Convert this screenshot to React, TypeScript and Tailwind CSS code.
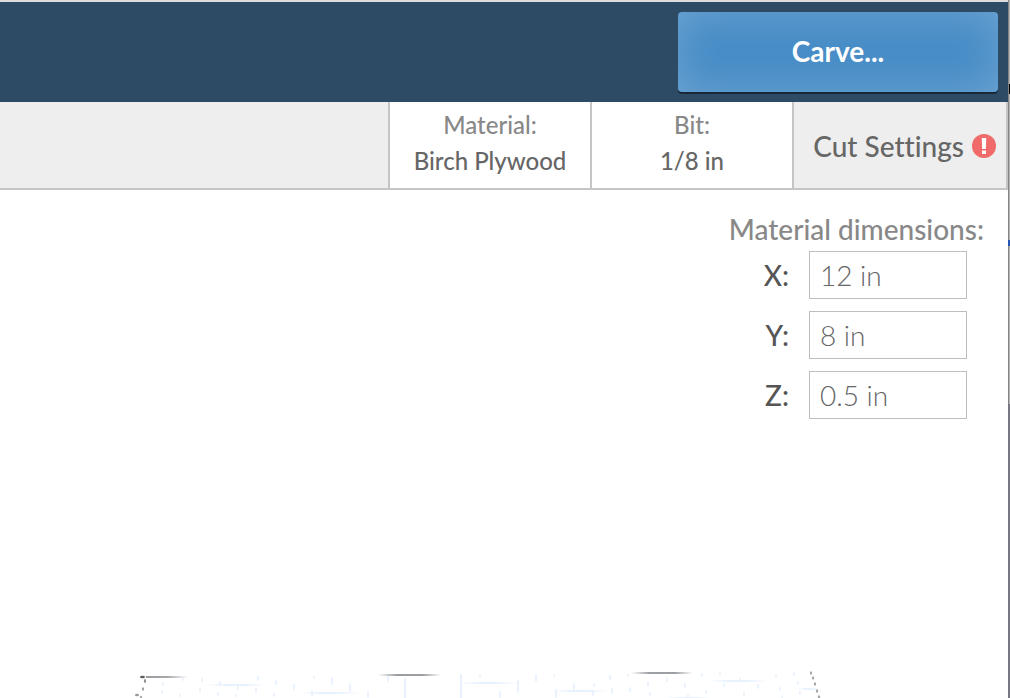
import { useState } from "react";

const axes = [
  { axis: "X", initial: "12 in" },
  { axis: "Y", initial: "8 in" },
  { axis: "Z", initial: "0.5 in" },
];

// Grid lines of the preview bed: x, y, length
const gridRows = [
  [206, 685, 60], [300, 693, 60], [458, 683, 60], [552, 691, 56],
  [708, 681, 60], [798, 689, 22], [666, 698, 46],
];
const gridTicks = [
  [162, 682, 4], [161, 690, 4], [182, 678, 3], [201, 678, 4], [199, 688, 4],
  [179, 694, 3], [219, 681, 5], [217, 692, 4], [237, 686, 4], [257, 676, 5],
  [255, 688, 5], [275, 680, 5], [273, 693, 4], [293, 684, 6], [313, 676, 3],
  [331, 677, 8], [349, 683, 9], [311, 690, 7], [235, 694, 3],
  [387, 675, 7], [367, 691, 7], [479, 675, 3], [499, 691, 7], [517, 680, 13],
  [535, 674, 8], [553, 674, 3], [555, 689, 9], [573, 683, 7],
  [592, 690, 6], [609, 675, 5], [611, 688, 6], [627, 674, 3], [629, 687, 5],
  [647, 681, 5], [649, 692, 4], [666, 677, 5], [684, 683, 5], [687, 694, 4],
  [701, 673, 4], [705, 690, 4], [719, 672, 3], [723, 683, 4], [739, 678, 4],
  [743, 692, 4], [757, 684, 5], [775, 674, 3], [779, 687, 4], [793, 672, 4],
  [797, 681, 4], [799, 691, 4], [593, 683, 4], [781, 695, 3],
];
const gridColumns = [[405, 678, 20], [461, 674, 24]];
const leftDots = [
  [145, 681, 1.1, 1.9, "#929292"], [143, 689, 1.1, 1.7, "#9c9c9c"],
  [137, 695, 2, 1.2, "#999999"], [141, 697, 1.2, 1.2, "#aaaaaa"],
] as const;
const edgeDots = [[811, 673], [813, 678], [815, 684], [817, 691], [819, 697]];

function WorkpiecePreview() {
  return (
    <svg
      className="mt-auto block h-[30px] w-full"
      viewBox="0 668 1008 30"
      preserveAspectRatio="xMidYMax meet"
      role="img"
      aria-label="Workpiece preview"
    >
      <defs>
        <linearGradient id="rule">
          <stop offset="0" stopColor="#9b9fa3" stopOpacity="0" />
          <stop offset=".3" stopColor="#9b9fa3" />
          <stop offset=".7" stopColor="#9b9fa3" />
          <stop offset="1" stopColor="#9b9fa3" stopOpacity="0" />
        </linearGradient>
        <linearGradient id="corner">
          <stop offset="0" stopColor="#999da1" />
          <stop offset=".5" stopColor="#a5a9ac" />
          <stop offset="1" stopColor="#a5a9ac" stopOpacity="0" />
        </linearGradient>
        <linearGradient id="pale">
          <stop offset="0" stopColor="#e8f2fd" stopOpacity="0" />
          <stop offset=".35" stopColor="#e8f2fd" />
          <stop offset=".65" stopColor="#e8f2fd" />
          <stop offset="1" stopColor="#e8f2fd" stopOpacity="0" />
        </linearGradient>
      </defs>
      {gridRows.map(([x, y, w]) => (
        <rect key={`${x}-${y}`} x={x} y={y - 1} width={w} height="2" fill="url(#pale)" />
      ))}
      {gridTicks.map(([x, y, h]) => (
        <rect key={`${x}-${y}`} x={x} y={y} width="2" height={h} rx="1" fill="#eaf3fd" />
      ))}
      {gridColumns.map(([x, y, h]) => (
        <rect key={x} x={x - 1} y={y} width="2" height={h} fill="#e9f2fc" />
      ))}
      <rect x="146" y="676" width="42" height="2" fill="url(#corner)" />
      <rect x="378" y="674" width="63" height="2" fill="url(#rule)" />
      <rect x="631" y="672" width="62" height="2" fill="url(#rule)" />
      <ellipse cx="142.5" cy="677" rx="2.5" ry="1.3" fill="#5c5c5c" />
      {leftDots.map(([x, y, rx, ry, color]) => (
        <ellipse key={x} cx={x} cy={y} rx={rx} ry={ry} fill={color} />
      ))}
      {edgeDots.map(([x, y]) => (
        <ellipse key={x} cx={x} cy={y} rx="1.2" ry="1.7" fill="#a7a7a7" />
      ))}
    </svg>
  );
}

function AlertIcon() {
  return (
    <svg className="size-6 shrink-0" viewBox="0 0 24 24" role="img" aria-label="Needs attention">
      <circle cx="12" cy="12" r="12" fill="#ef6a68" />
      <path d="M9.8 4h4.4l-.3 11h-3.8zM10 16.5h4V20h-4z" fill="#fff" />
    </svg>
  );
}

export default function App() {
  const [values, setValues] = useState(axes.map((a) => a.initial));

  return (
    <div className="flex min-h-screen bg-white font-['Lato',sans-serif] [font-variant-ligatures:none]">
      <div className="flex min-w-0 flex-1 flex-col border-t-2 border-[#dcdcdc]">
        <header className="flex justify-end bg-[#2d4b65] pt-2.5 pr-2.5 pb-2.5">
          <button
            type="button"
            className="h-20 w-80 rounded bg-[#488dc7] pb-0.5 text-[28px] font-bold text-white shadow-[inset_0_0_40px_rgba(255,255,255,0.2),0_2px_0_#182838]"
          >
            Carve...
          </button>
        </header>

        <nav className="flex h-22 justify-end border-r-2 border-b-2 border-[#c5c5c5] bg-[#eeeeee]" aria-label="Project settings">
          <button type="button" className="flex w-[202px] flex-col items-center border-l-2 border-[#c5c5c5] bg-white pt-[5px] text-2xl leading-9 font-medium">
            <span className="text-[#888888]">Material:</span>
            <span className="text-[#666666]">Birch Plywood</span>
          </button>
          <button type="button" className="flex w-[202px] flex-col items-center border-l-2 border-[#c5c5c5] bg-white pt-[5px] text-2xl leading-9 font-medium">
            <span className="text-[#888888]">Bit:</span>
            <span className="text-[#666666]">1/8 in</span>
          </button>
          <button type="button" className="flex w-[214px] items-center justify-end gap-2 border-l-2 border-[#c5c5c5] pt-px pr-2.5 text-[28px] font-medium whitespace-nowrap text-[#666666]">
            Cut Settings
            <AlertIcon />
          </button>
        </nav>

        <main className="flex flex-1 flex-col">
          <section className="flex flex-col items-end pt-5" aria-labelledby="dimensions-title">
            <h2 id="dimensions-title" className="pr-6 text-[28px] leading-[38px] font-medium text-[#888888]">
              Material dimensions:
            </h2>
            <div className="flex flex-col gap-3 pt-[3px] pr-[41px]">
              {axes.map(({ axis }, i) => (
                <div key={axis} className="flex items-center justify-end gap-5">
                  <label htmlFor={`size-${axis}`} className="text-[28px] font-medium text-[#555555]">
                    {axis}:
                  </label>
                  <input
                    id={`size-${axis}`}
                    type="text"
                    value={values[i]}
                    onChange={(e) => setValues(values.map((v, j) => (j === i ? e.target.value : v)))}
                    className="h-12 w-[158px] border border-[#bdbdbd] bg-white px-2.5 text-[28px] font-light text-[#666666]"
                  />
                </div>
              ))}
            </div>
          </section>
          <WorkpiecePreview />
        </main>
      </div>

      <div className="flex w-0.5 shrink-0 flex-col" aria-hidden="true">
        <div className="h-[84px] border-l border-[#858585] bg-[#b5b5b5]" />
        <div className="h-2.5 border-l border-[#858585] bg-black" />
        <div className="h-[146px] border-l border-[#858585] bg-[#b5b5b5]" />
        <div className="h-1.5 bg-[#2555b5]" />
        <div className="h-[158px] border-l border-[#858585] bg-[#b5b5b5]" />
        <div className="flex-1 bg-[#777783]" />
      </div>
    </div>
  );
}
